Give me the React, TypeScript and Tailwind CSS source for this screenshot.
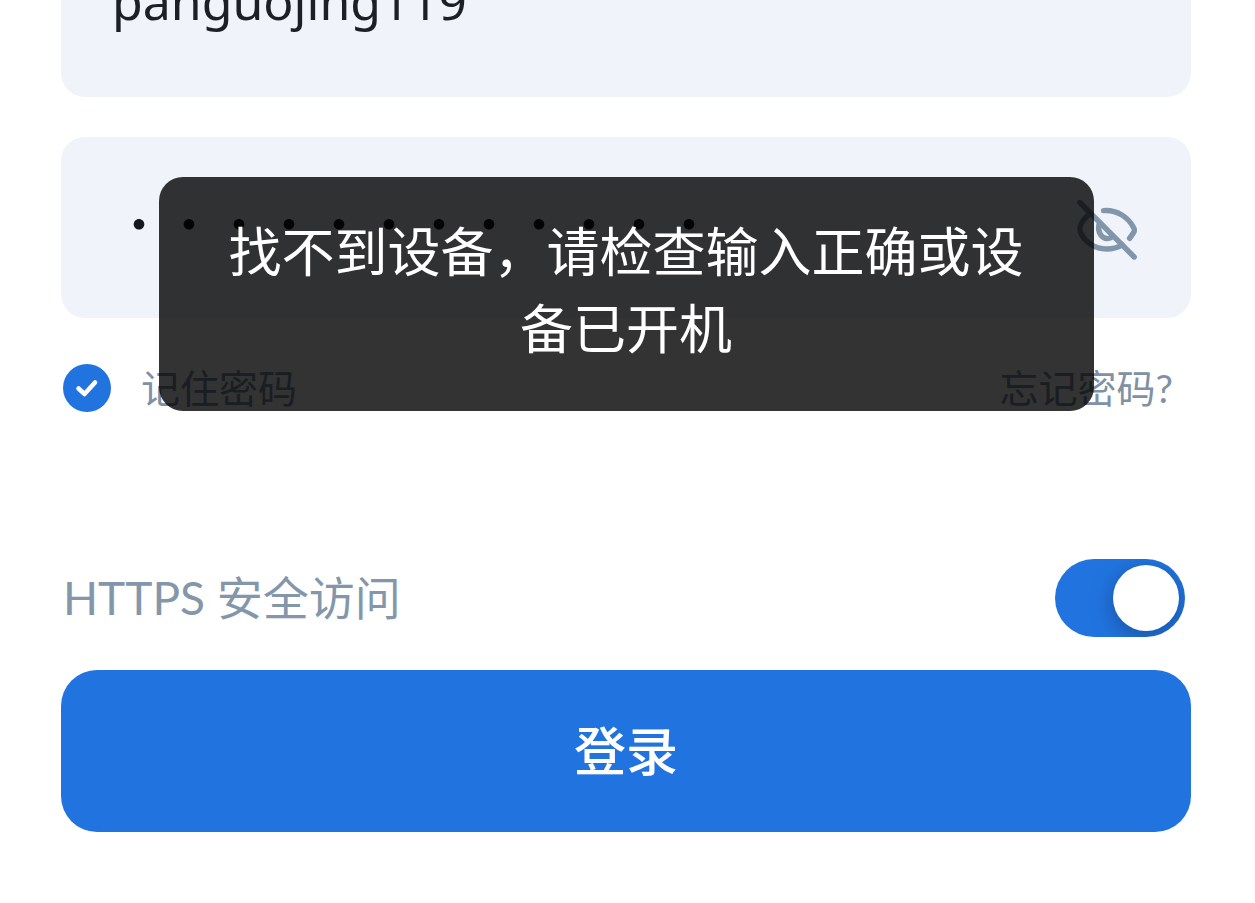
import { useState } from "react";

function EyeOffIcon() {
  return (
    <svg
      viewBox="0 0 60 60"
      className="size-[60px]"
      fill="none"
      stroke="currentColor"
      strokeWidth="5.4"
      strokeLinecap="round"
      strokeLinejoin="round"
      aria-hidden="true"
    >
      <path d="M2.8 2.5 57.2 57" />
      <path d="M26.5 10.6C40 9.6 51 17 56.6 27.5C57.8 29.6 57.6 31 56.6 32.6L52.6 38.4" />
      <path d="M12 14.5C7 18.5 3.9 23 3 27.5C2.6 29.5 2.9 31 3.7 32.6C8 42.5 18 49 29.5 49C35.5 49 40.5 47.8 45 45" />
      <path d="M22 24.5C20.4 31.5 24 38.6 30.5 38.6C32.4 38.6 34 38 35.4 36.8" />
    </svg>
  );
}

export default function App() {
  const [user, setUser] = useState("panguojing119");
  const [password, setPassword] = useState("panguojing12");
  const [visible, setVisible] = useState(false);

  return (
    <div className="relative min-h-screen overflow-hidden bg-white font-['Lato','Noto_Sans_CJK_SC',sans-serif]">
      <form
        className="-mt-[84px] flex flex-col pr-16 pb-[71px] pl-[61px]"
        onSubmit={(e) => e.preventDefault()}
      >
        <input
          type="text"
          aria-label="用户名"
          value={user}
          onChange={(e) => setUser(e.target.value)}
          className="h-[181px] w-full rounded-3xl bg-[#f0f3fa] px-[51px] pb-3 font-['Noto_Sans',sans-serif] text-[50px] text-[#1c2026] outline-none"
        />

        <div className="mt-10 flex h-[181px] items-center rounded-3xl bg-[#f0f3fa] pr-[54px] pl-[53px]">
          <input
            type={visible ? "text" : "password"}
            aria-label="密码"
            value={password}
            onChange={(e) => setPassword(e.target.value)}
            className="min-w-0 flex-1 bg-transparent pb-3 font-['Noto_Sans_CJK_SC',sans-serif] text-[50px] text-[#14181d] outline-none"
          />
          <button
            type="button"
            aria-label="显示密码"
            onClick={() => setVisible(!visible)}
            className="pt-1 text-[#8296ab]"
          >
            <EyeOffIcon />
          </button>
        </div>

        <div className="mt-[46px] flex h-12 items-center justify-between pr-[18px] pl-0.5 text-[39px] text-[#8091a5]">
          <label className="flex items-center gap-[30px]">
            <span className="grid size-12 place-items-center">
              <input
                type="checkbox"
                defaultChecked
                className="col-start-1 row-start-1 size-12 appearance-none rounded-full border-2 border-[#8091a5] checked:border-0 checked:bg-[#2174e0]"
              />
              <svg
                viewBox="0 0 48 48"
                className="pointer-events-none col-start-1 row-start-1 size-12"
                fill="none"
                stroke="white"
                strokeWidth="4.5"
                strokeLinecap="round"
                strokeLinejoin="round"
                aria-hidden="true"
              >
                <path d="M15.5 24.5 21.5 30 32 18.5" />
              </svg>
            </span>
            记住密码
          </label>
          <a href="#forgot">忘记密码?</a>
        </div>

        <label className="mt-[147px] flex items-center justify-between pr-1.5 pl-0.5 text-[46px] leading-[78px] text-[#8497aa]">
          HTTPS 安全访问
          <span className="grid h-[78px] w-[130px] items-center">
            <input
              type="checkbox"
              role="switch"
              defaultChecked
              className="peer col-start-1 row-start-1 h-[78px] w-[130px] appearance-none rounded-full bg-[#c5ced8] checked:bg-[#2174e0]"
            />
            <span className="pointer-events-none col-start-1 row-start-1 h-[78px] w-[130px] overflow-hidden rounded-full p-1.5 peer-checked:pl-[58px]">
              <span className="block size-[66px] rounded-full bg-white shadow-[0_6px_24px_rgba(0,0,0,0.3)]" />
            </span>
          </span>
        </label>

        <button
          type="submit"
          className="mt-[33px] h-[162px] rounded-[36px] bg-[#2174e0] text-[52px] font-medium text-white"
        >
          登录
        </button>
      </form>

      <div className="pointer-events-none absolute inset-x-0 top-[177px] flex justify-center pr-16 pl-[61px]">
        <div
          role="alert"
          className="w-[935px] rounded-3xl bg-black/80 px-16 pt-9 pb-11 text-center text-[53px] leading-[77px] text-white"
        >
          找不到设备，请检查输入正确或设备已开机
        </div>
      </div>
    </div>
  );
}
